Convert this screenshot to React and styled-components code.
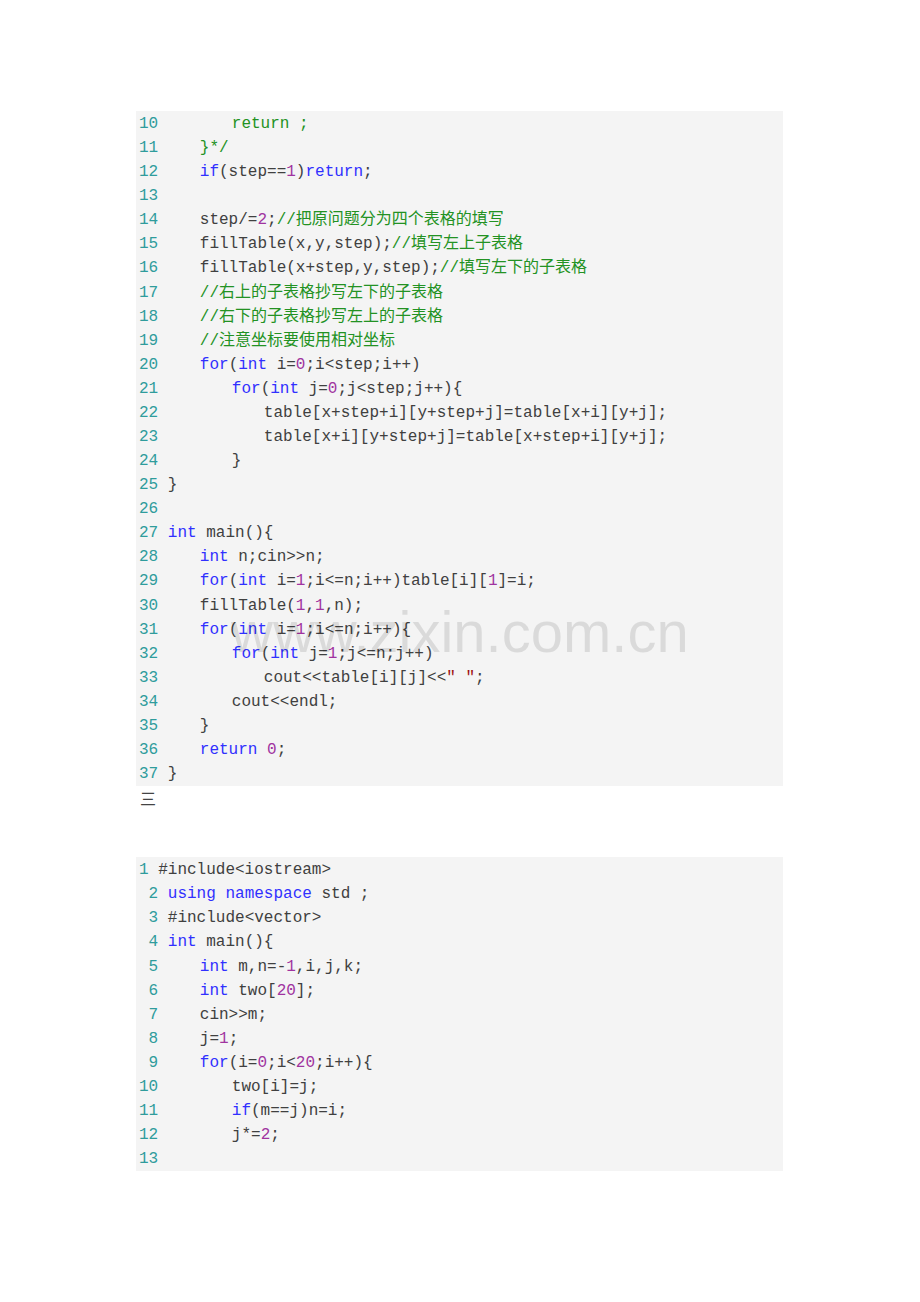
import React from 'react';
import styled, { createGlobalStyle } from 'styled-components';

const GlobalStyle = createGlobalStyle`
  body {
    margin: 0;
    background: #fff;
  }
`;

const Page = styled.div`
  position: relative;
  width: 920px;
  min-height: 1302px;
  padding: 111px 0 0 136px;
  box-sizing: border-box;
`;

const CodeBlock = styled.div`
  width: 647px;
  background-color: #f4f4f4;
  padding: 1px 0 0 3px;
  box-sizing: border-box;
  font-family: 'Liberation Mono', 'Noto Sans CJK SC', monospace;
  font-size: 16px;
  line-height: 24.08px;
  color: #404040;
`;

const Line = styled.div`
  display: flex;
  height: 24.08px;
  white-space: pre;
`;

const LineNo = styled.span`
  color: #2f9c9c;
`;

const Code = styled.span`
  padding-left: ${(p) => p.$indent * 32}px;
  color: ${(p) => (p.$comment ? '#239223' : 'inherit')};
`;

const Keyword = styled.span`
  color: #3030ff;
`;
const Num = styled.span`
  color: #a0339f;
`;
const Comment = styled.span`
  color: #239223;
`;
const Str = styled.span`
  color: #a01010;
`;

const Heading = styled.p`
  margin: 0 0 47px 4px;
  font-family: 'Noto Sans CJK SC', sans-serif;
  font-size: 16px;
  line-height: 24px;
  color: #444;
`;

const Watermark = styled.div`
  position: absolute;
  left: 231px;
  top: 603px;
  font-family: 'Liberation Sans', Arial, sans-serif;
  font-size: 58px;
  line-height: 1;
  color: rgba(0, 0, 0, 0.105);
  pointer-events: none;
  white-space: nowrap;
`;

const KEYWORDS = ['int', 'for', 'if', 'return', 'using', 'namespace'];
const TOKEN = /(\/\/.*$)|("[^"]*")|\b(int|for|if|return|using|namespace)\b|(\b\d+\b)/g;

const highlight = (text) => {
  const out = [];
  let last = 0;
  let m;
  TOKEN.lastIndex = 0;
  while ((m = TOKEN.exec(text))) {
    if (m.index > last) out.push(text.slice(last, m.index));
    const k = m.index;
    if (m[1]) out.push(<Comment key={k}>{m[1]}</Comment>);
    else if (m[2]) out.push(<Str key={k}>{m[2]}</Str>);
    else if (m[3] && KEYWORDS.includes(m[3])) out.push(<Keyword key={k}>{m[3]}</Keyword>);
    else if (m[4]) out.push(<Num key={k}>{m[4]}</Num>);
    last = TOKEN.lastIndex;
  }
  if (last < text.length) out.push(text.slice(last));
  return out;
};

// [indent, text, inBlockComment]
const firstBlock = [
  [2, 'return ;', true],
  [1, '}*/', true],
  [1, 'if(step==1)return;'],
  [0, ''],
  [1, 'step/=2;//把原问题分为四个表格的填写'],
  [1, 'fillTable(x,y,step);//填写左上子表格'],
  [1, 'fillTable(x+step,y,step);//填写左下的子表格'],
  [1, '//右上的子表格抄写左下的子表格'],
  [1, '//右下的子表格抄写左上的子表格'],
  [1, '//注意坐标要使用相对坐标'],
  [1, 'for(int i=0;i<step;i++)'],
  [2, 'for(int j=0;j<step;j++){'],
  [3, 'table[x+step+i][y+step+j]=table[x+i][y+j];'],
  [3, 'table[x+i][y+step+j]=table[x+step+i][y+j];'],
  [2, '}'],
  [0, '}'],
  [0, ''],
  [0, 'int main(){'],
  [1, 'int n;cin>>n;'],
  [1, 'for(int i=1;i<=n;i++)table[i][1]=i;'],
  [1, 'fillTable(1,1,n);'],
  [1, 'for(int i=1;i<=n;i++){'],
  [2, 'for(int j=1;j<=n;j++)'],
  [3, 'cout<<table[i][j]<<" ";'],
  [2, 'cout<<endl;'],
  [1, '}'],
  [1, 'return 0;'],
  [0, '}'],
];

const secondBlock = [
  [0, '#include<iostream>'],
  [0, 'using namespace std ;'],
  [0, '#include<vector>'],
  [0, 'int main(){'],
  [1, 'int m,n=-1,i,j,k;'],
  [1, 'int two[20];'],
  [1, 'cin>>m;'],
  [1, 'j=1;'],
  [1, 'for(i=0;i<20;i++){'],
  [2, 'two[i]=j;'],
  [2, 'if(m==j)n=i;'],
  [2, 'j*=2;'],
  [0, ''],
];

const CodeLines = ({ lines, start, padFirst = true }) =>
  lines.map(([indent, text, comment], i) => {
    const n = start + i;
    const label = n === 1 && !padFirst ? '1 ' : String(n).padStart(2, ' ') + ' ';
    return (
      <Line key={n}>
        <LineNo>{label}</LineNo>
        <Code $indent={indent} $comment={comment}>
          {comment ? text : highlight(text)}
        </Code>
      </Line>
    );
  });

export default function App() {
  return (
    <Page>
      <GlobalStyle />
      <CodeBlock>
        <CodeLines lines={firstBlock} start={10} />
      </CodeBlock>
      <Heading>三</Heading>
      <CodeBlock>
        <CodeLines lines={secondBlock} start={1} padFirst={false} />
      </CodeBlock>
      <Watermark>www.zixin.com.cn</Watermark>
    </Page>
  );
}
